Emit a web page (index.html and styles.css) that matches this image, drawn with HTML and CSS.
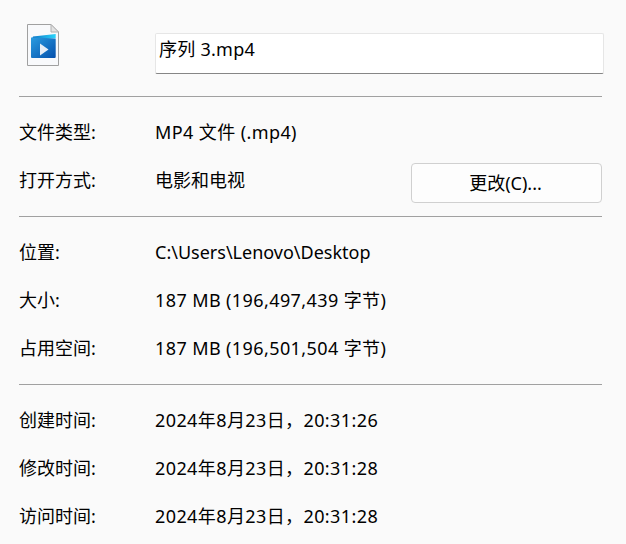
FILE: index.html
```html
<!DOCTYPE html>
<html lang="zh-CN">
<head>
<meta charset="utf-8">
<title>属性</title>
<link rel="stylesheet" href="styles.css">
</head>
<body>
<main class="panel">
  <header class="head">
    <svg class="file-icon" width="33" height="43" viewBox="0 0 33 43" aria-hidden="true">
      <defs>
        <linearGradient id="blue" x1="0" y1="0" x2="1" y2="1">
          <stop offset="0" stop-color="#2a9ce0"/>
          <stop offset="1" stop-color="#0550ac"/>
        </linearGradient>
        <linearGradient id="cyan" x1="0" y1="0" x2="1" y2="0">
          <stop offset="0" stop-color="#0a70c4"/>
          <stop offset="1" stop-color="#2ad4fa"/>
        </linearGradient>
      </defs>
      <path d="M.5 .5H24L31.5 8V41.5H.5Z" fill="#f8f9fb" stroke="#a0a0a0"/>
      <path d="M24 .5V8H31.5Z" fill="#e2e2e2" stroke="#b0b0b0"/>
      <path d="M6 12.5L28.7 10V14L10 16L4 17Z" fill="url(#cyan)"/>
      <path d="M4 13.5L28.7 14.5V33A1 1 0 0 1 27.7 34H5A1 1 0 0 1 4 33Z" fill="url(#blue)"/>
      <path d="M13 19.5L21.5 25.5L13 31.5Z" fill="#e8eef6"/>
    </svg>
    <input class="name" type="text" value="序列 3.mp4" aria-label="文件名">
  </header>
  <hr class="rule">
  <section class="group group-first">
    <div class="row"><span class="label">文件类型:</span><span class="spaced">MP4 文件 (.mp4)</span></div>
    <div class="row"><span class="label">打开方式:</span><span>电影和电视</span><button class="change" type="button">更改(C)...</button></div>
  </section>
  <hr class="rule">
  <section class="group">
    <div class="row"><span class="label">位置:</span><span>C:\Users\Lenovo\Desktop</span></div>
    <div class="row"><span class="label">大小:</span><span class="spaced">187 MB (196,497,439 字节)</span></div>
    <div class="row"><span class="label">占用空间:</span><span class="spaced">187 MB (196,501,504 字节)</span></div>
  </section>
  <hr class="rule">
  <section class="group">
    <div class="row"><span class="label">创建时间:</span><span class="spaced">2024年8月23日，20:31:26</span></div>
    <div class="row"><span class="label">修改时间:</span><span class="spaced">2024年8月23日，20:31:28</span></div>
    <div class="row"><span class="label">访问时间:</span><span class="spaced">2024年8月23日，20:31:28</span></div>
  </section>
</main>
</body>
</html>
```
FILE: styles.css
```css
* { box-sizing: border-box; }
html, body { margin: 0; height: 100%; }
body {
  background: #fafafa;
  color: #000;
  font: 18px/24px "Noto Sans", "Noto Sans CJK SC", sans-serif;
  overflow: hidden;
}
.panel { padding: 24px 24px 0 19px; width: 626px; }
.head { display: flex; align-items: flex-start; height: 72px; }
.file-icon { margin-left: 8px; flex: none; }
.name {
  margin: 9px -2px 0 95px;
  width: 450px;
  height: 41px;
  padding: 0 3px 11px;
  border: 1px solid #e6e6e6;
  border-bottom: 1px solid #868686;
  border-radius: 2px;
  background: #fff;
  color: #000;
  font: inherit;
  letter-spacing: .25px;
  outline: none;
}
.rule { margin: 0; border: 0; border-top: 1px solid #a0a0a0; }
.group { display: flex; flex-direction: column; gap: 24px; padding: 23px 0 24px; }
.group-first { padding-top: 23px; }
.row { display: flex; align-items: center; height: 24px; }
.label { width: 136px; flex: none; }
.spaced { letter-spacing: .4px; }
.change {
  margin: 3px 0 -3px auto;
  width: 191px;
  height: 40px;
  padding: 0 8px 0 6px;
  flex: none;
  border: 1px solid #d0d0d0;
  border-radius: 4px;
  background: #fdfdfd;
  color: #000;
  font: inherit;
}
```
